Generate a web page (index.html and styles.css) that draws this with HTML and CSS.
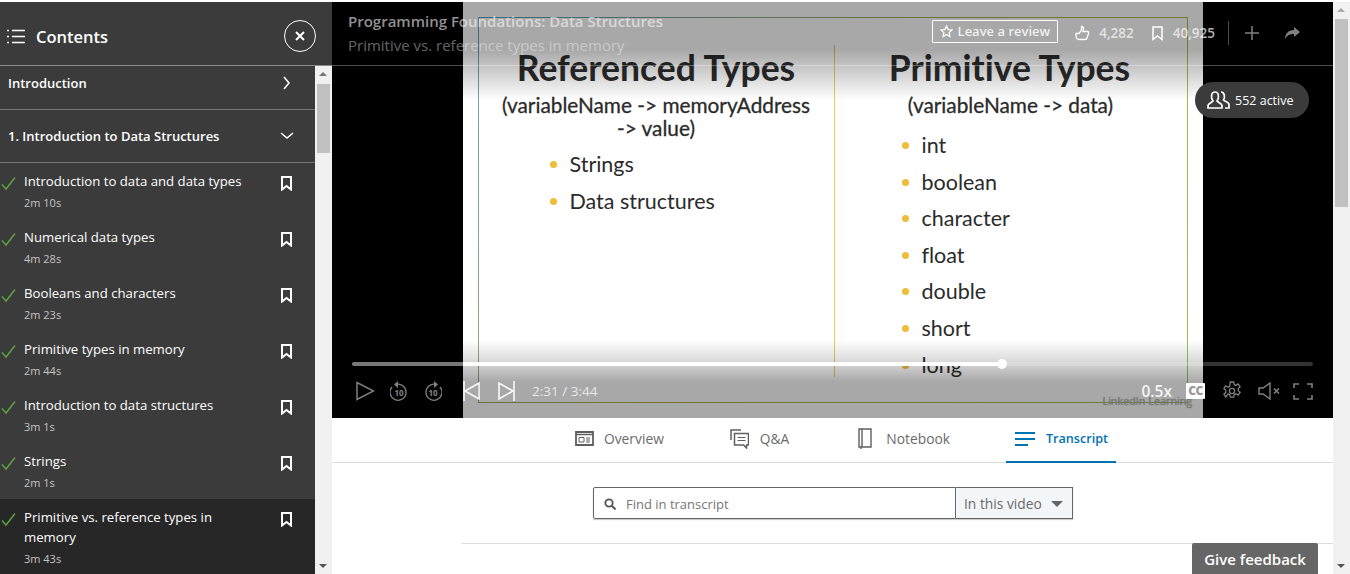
FILE: index.html
```html
<!DOCTYPE html>
<html lang="en">
<head>
    <meta charset="UTF-8">
    <meta name="viewport" content="width=device-width, initial-scale=1.0">
    <title>Primitive vs. reference types in memory</title>
    <link rel="stylesheet" href="styles.css">
</head>
<body>
    <svg class="defs" width="0" height="0">
        <symbol id="check" viewBox="0 0 15 15"><path d="M1 8.500 5 13 14 1.500" fill="none" stroke="#5f9e3e" stroke-width="1.500"/></symbol>
        <symbol id="mark" viewBox="0 0 11 15"><path d="M1 1h9v12.500L5.500 10 1 13.500z" fill="none" stroke="#fff" stroke-width="2"/></symbol>
    </svg>

    <div class="page">
        <aside class="sidebar">
            <header class="side-head">
                <svg class="list-icon" width="18" height="15" viewBox="0 0 18 15">
                    <path d="M0 1.500h2M0 7.500h2M0 13.500h2M5 1.500h13M5 7.500h13M5 13.500h13" stroke="#fff" stroke-width="1.600"/>
                </svg>
                <h2>Contents</h2>
                <button class="close-btn">
                    <svg width="10" height="10" viewBox="0 0 10 10"><path d="M1 1l8 8M9 1l-8 8" stroke="#fff" stroke-width="2"/></svg>
                </button>
            </header>
            <div class="side-body">
                <div class="toc">
                    <div class="chapter chapter-intro">
                        <span>Introduction</span>
                        <svg width="7" height="14" viewBox="0 0 7 14"><path d="M1 1l5 6-5 6" fill="none" stroke="#fff" stroke-width="1.600"/></svg>
                    </div>
                    <div class="chapter chapter-open">
                        <span>1. Introduction to Data Structures</span>
                        <svg width="14" height="8" viewBox="0 0 14 8"><path d="M1 1l6 5 6-5" fill="none" stroke="#fff" stroke-width="1.600"/></svg>
                    </div>
                    <div class="lesson">
                        <svg class="check"><use href="#check"/></svg>
                        <div class="lesson-text"><p>Introduction to data and data types</p><small>2m 10s</small></div>
                        <svg class="mark"><use href="#mark"/></svg>
                    </div>
                    <div class="lesson">
                        <svg class="check"><use href="#check"/></svg>
                        <div class="lesson-text"><p>Numerical data types</p><small>4m 28s</small></div>
                        <svg class="mark"><use href="#mark"/></svg>
                    </div>
                    <div class="lesson">
                        <svg class="check"><use href="#check"/></svg>
                        <div class="lesson-text"><p>Booleans and characters</p><small>2m 23s</small></div>
                        <svg class="mark"><use href="#mark"/></svg>
                    </div>
                    <div class="lesson">
                        <svg class="check"><use href="#check"/></svg>
                        <div class="lesson-text"><p>Primitive types in memory</p><small>2m 44s</small></div>
                        <svg class="mark"><use href="#mark"/></svg>
                    </div>
                    <div class="lesson">
                        <svg class="check"><use href="#check"/></svg>
                        <div class="lesson-text"><p>Introduction to data structures</p><small>3m 1s</small></div>
                        <svg class="mark"><use href="#mark"/></svg>
                    </div>
                    <div class="lesson">
                        <svg class="check"><use href="#check"/></svg>
                        <div class="lesson-text"><p>Strings</p><small>2m 1s</small></div>
                        <svg class="mark"><use href="#mark"/></svg>
                    </div>
                    <div class="lesson lesson-active">
                        <svg class="check"><use href="#check"/></svg>
                        <div class="lesson-text"><p>Primitive vs. reference types in memory</p><small>3m 43s</small></div>
                        <svg class="mark"><use href="#mark"/></svg>
                    </div>
                </div>
                <div class="scrollbar scrollbar-side">
                    <i class="arrow-up"></i>
                    <i class="thumb"></i>
                    <i class="arrow-down"></i>
                </div>
            </div>
        </aside>

        <main class="main">
            <section class="video">
                <div class="slide">
                    <div class="frame">
                        <div class="slide-col">
                            <h3>Referenced Types</h3>
                            <h4>(variableName -&gt; memoryAddress<br>-&gt; value)</h4>
                            <ul class="list-left">
                                <li>Strings</li>
                                <li>Data structures</li>
                            </ul>
                        </div>
                        <div class="slide-col slide-col-right">
                            <h3>Primitive Types</h3>
                            <h4>(variableName -&gt; data)</h4>
                            <ul class="list-right">
                                <li>int</li>
                                <li>boolean</li>
                                <li>character</li>
                                <li>float</li>
                                <li>double</li>
                                <li>short</li>
                                <li>long</li>
                            </ul>
                        </div>
                    </div>
                    <span class="watermark">LinkedIn Learning</span>
                </div>

                <div class="shade"></div>

                <div class="video-top">
                    <div class="titles">
                        <div class="course">Programming Foundations: Data Structures</div>
                        <div class="lesson-name">Primitive vs. reference types in memory</div>
                    </div>
                    <div class="top-actions">
                        <button class="review">
                            <svg width="13" height="13" viewBox="0 0 13 13"><path d="M6.500 1l1.600 3.600 3.900.4-2.900 2.600.8 3.900-3.400-2-3.400 2 .8-3.900L1 5l3.900-.4z" fill="none" stroke="#fff" stroke-width="1.200"/></svg>
                            Leave a review
                        </button>
                        <span class="stat stat-likes">
                            <svg width="15" height="16" viewBox="0 0 15 16"><path d="M1 8.500h3l2.500-3.500V1.500c1.500 0 2 1 2 2.500l-.5 2.500h4.500c1 0 1.500 1 1 2l-1.500 4.500c-.3 1-1 1.500-2 1.500H5c-2.500 0-4-1.500-4-3.500z" fill="none" stroke="#fff" stroke-width="1.300"/></svg>
                            4,282
                        </span>
                        <span class="stat stat-saves">
                            <svg width="11" height="15" viewBox="0 0 11 15"><path d="M1 1h9v12.500L5.500 10 1 13.500z" fill="none" stroke="#fff" stroke-width="1.500"/></svg>
                            40,925
                        </span>
                        <i class="top-sep"></i>
                        <svg class="dim" width="14" height="14" viewBox="0 0 14 14"><path d="M7 0v14M0 7h14" stroke="#fff" stroke-width="1.500"/></svg>
                        <svg class="dim share" width="17" height="14" viewBox="0 0 17 14"><path d="M10 1l6 5-6 5V8C6 8 3 9 1 13c0-5 3-9 9-9z" fill="#fff"/></svg>
                    </div>
                </div>
                <div class="top-line"></div>

                <div class="active-pill">
                    <svg width="23" height="18" viewBox="0 0 23 18"><path d="M1 17v-2.500c0-2 4-3 5-4.500-2-2-2.500-9 2-9s4 7 2 9c1 1.500 5 2.500 5 4.500V17zM14 1c4 0 4 6 2.500 8 1 1.200 5.500 2 5.500 4.500V17h-4" fill="none" stroke="#fff" stroke-width="1.700"/></svg>
                    552 active
                </div>

                <div class="controls">
                    <div class="progress"><i class="progress-fill"></i><i class="progress-knob"></i></div>
                    <div class="control-row">
                        <svg class="dim" width="19" height="20" viewBox="0 0 19 20"><path d="M1 1.500v17L17.500 10z" fill="none" stroke="#fff" stroke-width="1.500"/></svg>
                        <svg class="dim skip-back" width="18" height="20" viewBox="0 0 18 20"><path d="M6 3.500a8 8 0 1 1-4 2.500" fill="none" stroke="#fff" stroke-width="1.300"/><path d="M8 0v7L4 3.500z" fill="#fff"/><text x="9" y="15" class="ten">10</text></svg>
                        <svg class="dim skip-fwd" width="18" height="20" viewBox="0 0 18 20"><path d="M12 3.500a8 8 0 1 0 4 2.500" fill="none" stroke="#fff" stroke-width="1.300"/><path d="M10 0v7l4-3.500z" fill="#fff"/><text x="9" y="15" class="ten">10</text></svg>
                        <svg class="bright prev" width="17" height="20" viewBox="0 0 17 20"><path d="M1 0v20" stroke="#fff" stroke-width="1.500"/><path d="M16 2v16L2 10z" fill="none" stroke="#fff" stroke-width="1.500"/></svg>
                        <svg class="bright next" width="17" height="20" viewBox="0 0 17 20"><path d="M16 0v20" stroke="#fff" stroke-width="1.500"/><path d="M1 2v16l14-8z" fill="none" stroke="#fff" stroke-width="1.500"/></svg>
                        <span class="time">2:31 / 3:44</span>
                        <span class="speed">0.5x</span>
                        <span class="cc">CC</span>
                        <svg class="dim gear" width="20" height="20" viewBox="0 0 20 20"><path d="M8.300 1h3.400l.5 2.600 1.700.8 2.300-1.400 1.900 2.800-1.900 1.800v2l1.900 1.800-1.900 2.800-2.300-1.400-1.700.8-.5 2.600H8.300l-.5-2.600-1.700-.8L3.800 16l-1.900-2.800L3.800 11.400v-2L1.900 7.600 3.800 4.800l2.300 1.400 1.700-.8z" fill="none" stroke="#fff" stroke-width="1.300"/><circle cx="10" cy="10" r="2.600" fill="none" stroke="#fff" stroke-width="1.300"/></svg>
                        <svg class="dim mute" width="23" height="18" viewBox="0 0 23 18"><path d="M1 6v6h4l7 5V1L5 6z" fill="none" stroke="#fff" stroke-width="1.400"/><path d="M16 6.500l5 5M21 6.500l-5 5" stroke="#fff" stroke-width="1.600"/></svg>
                        <svg class="dim full" width="20" height="17" viewBox="0 0 20 17"><path d="M1 5V1h5M14 1h5v4M19 12v4h-5M6 16H1v-4" fill="none" stroke="#fff" stroke-width="1.600"/></svg>
                    </div>
                </div>
            </section>

            <nav class="tabs">
                <a class="tab tab-overview">
                    <svg width="19" height="15" viewBox="0 0 19 15"><path d="M1 1h17v13H1z" fill="none" stroke="#5f5f5f" stroke-width="1.800"/><path d="M1 3.500h17" stroke="#5f5f5f" stroke-width="1.500"/><path d="M4 6.500h5v4.500H4z" fill="none" stroke="#5f5f5f"/><path d="M11 7h4M11 9h4M11 11h4" stroke="#5f5f5f"/></svg>
                    Overview
                </a>
                <a class="tab tab-qa">
                    <svg width="19" height="20" viewBox="0 0 19 20"><path d="M11 1H1v10" fill="none" stroke="#5f5f5f" stroke-width="1.500"/><path d="M4.500 4.500h14v11.500h-2V19l-3-3h-9z" fill="none" stroke="#5f5f5f" stroke-width="1.500"/><path d="M7.500 8.500h8M7.500 11.500h8" stroke="#5f5f5f" stroke-width="1.200"/></svg>
                    Q&amp;A
                </a>
                <a class="tab tab-note">
                    <svg width="14" height="22" viewBox="0 0 14 22"><path d="M1 1h12v18H1zM4 1v18M3 19v2" fill="none" stroke="#5f5f5f" stroke-width="1.400"/></svg>
                    Notebook
                </a>
                <a class="tab tab-active">
                    <svg width="20" height="14" viewBox="0 0 20 14"><path d="M0 1h20M0 7h20M0 13h13" stroke="#0073b1" stroke-width="2"/></svg>
                    Transcript
                </a>
            </nav>

            <section class="transcript">
                <div class="search">
                    <div class="search-box">
                        <svg width="12" height="12" viewBox="0 0 12 12"><circle cx="5" cy="5" r="3.700" fill="none" stroke="#555" stroke-width="1.800"/><path d="M7.500 7.500l4 4" stroke="#555" stroke-width="2"/></svg>
                        <span>Find in transcript</span>
                    </div>
                    <div class="search-scope">In this video<i class="caret"></i></div>
                </div>
                <hr class="rule">
            </section>

            <button class="feedback">Give feedback</button>
        </main>

        <div class="scrollbar scrollbar-page">
            <i class="arrow-up"></i>
            <i class="thumb"></i>
            <i class="arrow-down"></i>
        </div>
    </div>
</body>
</html>
```

FILE: styles.css
```css
* {
    box-sizing: border-box;
}

body {
    margin: 0;
    background-color: #fff;
    font-family: 'Open Sans', 'Noto Sans', sans-serif;
    color: #333;
    overflow: hidden;
}

.defs {
    position: absolute;
}

.page {
    display: flex;
    height: 574px;
    padding-top: 2px;
}

/* sidebar */
.sidebar {
    width: 332px;
    flex: none;
    display: flex;
    flex-direction: column;
    background-color: #3b3b3b;
    color: #fff;
}

.side-head {
    height: 64px;
    flex: none;
    display: flex;
    align-items: center;
    padding: 5px 16px 0 7px;
    border-bottom: 1px solid #8a8a8a;
}

.side-head h2 {
    margin: 0 0 0 11px;
    font-size: 16.500px;
    font-weight: 600;
    flex: 1;
}

.close-btn {
    width: 32px;
    height: 32px;
    display: flex;
    align-items: center;
    justify-content: center;
    background: none;
    border: 1px solid #fff;
    border-radius: 50%;
    padding: 0;
}

.side-body {
    flex: 1;
    display: flex;
    min-height: 0;
}

.toc {
    width: 315px;
    overflow: hidden;
}

.chapter {
    display: flex;
    align-items: center;
    justify-content: space-between;
    padding: 0 24px 0 8px;
    font-size: 13px;
    font-weight: 600;
    border-bottom: 1px solid #777;
}

.chapter-intro {
    height: 44px;
    padding-right: 25px;
    padding-bottom: 10px;
}

.chapter-open {
    height: 53px;
    padding-right: 21px;
}

.lesson {
    display: flex;
    height: 56px;
    padding: 8px 0 0 1px;
    font-size: 13.200px;
}

.lesson-active {
    height: 78px;
    background-color: #272727;
}

.check {
    width: 15px;
    height: 15px;
    flex: none;
    margin-top: 5px;
}

.lesson-text {
    width: 225px;
    margin-left: 8px;
}

.lesson-text p {
    margin: 0;
    line-height: 20px;
}

.lesson-text small {
    display: block;
    margin-top: 4px;
    font-size: 11px;
    line-height: 16px;
    color: #c4c4c4;
}

.mark {
    width: 11px;
    height: 15px;
    flex: none;
    margin: 5px 0 0 32px;
}

/* scrollbars */
.scrollbar {
    width: 17px;
    flex: none;
    position: relative;
    background-color: #f1f1f1;
}

.scrollbar .thumb {
    display: block;
    position: absolute;
    left: 2px;
    width: 13px;
    background-color: #c1c1c1;
}

.scrollbar-side .thumb {
    top: 18px;
    height: 69px;
}

.scrollbar-page .thumb {
    top: 17px;
    height: 188px;
}

.arrow-up,
.arrow-down {
    position: absolute;
    left: 4px;
    width: 0;
    height: 0;
    border-left: 4px solid transparent;
    border-right: 4px solid transparent;
}

.arrow-up {
    top: 6px;
    border-bottom: 4px solid #777;
}

.arrow-down {
    bottom: 6px;
    border-top: 4px solid #555;
}

.scrollbar-page .arrow-up {
    border-bottom-color: #aaa;
}

/* video */
.main {
    width: 1001px;
    flex: none;
    position: relative;
}

.video {
    height: 416px;
    position: relative;
    display: flex;
    justify-content: center;
    background-color: #000;
    overflow: hidden;
}

.slide {
    width: 740px;
    height: 416px;
    padding: 15px;
    position: relative;
    background-color: #fff;
    font-family: 'Lato', 'Open Sans', sans-serif;
    font-variant-ligatures: none;
    color: #2b2b2b;
}

.frame {
    height: 386px;
    display: grid;
    grid-template-columns: 355px 1fr;
    grid-template-rows: 332px;
    padding: 27px 0 25px;
    border: 1px solid;
    border-image: linear-gradient(135deg, #5f9fc4, #b3b04a 50%, #9cc060) 1;
}

.slide-col {
    text-align: center;
}

.slide-col-right {
    border-left: 1px solid #edc65a;
}

.slide h3 {
    margin: -1px 0 0;
    font-size: 35.500px;
    line-height: 48px;
    font-weight: 700;
}

.slide-col-right h3 {
    padding-right: 2px;
}

.slide h4 {
    margin: 1px 0 0;
    font-size: 20.800px;
    line-height: 23px;
    font-weight: 400;
    -webkit-text-stroke: 0.3px #2b2b2b;
}

.slide ul {
    list-style: none;
    margin: 0;
    padding: 0;
    text-align: left;
    font-size: 21.500px;
    font-weight: 400;
}

.slide li {
    position: relative;
    height: 36.600px;
    line-height: 36.600px;
}

.slide li::before {
    content: "";
    position: absolute;
    left: -20px;
    top: 15px;
    width: 7px;
    height: 7px;
    border-radius: 50%;
    background-color: #efbd3a;
}

.slide .list-left {
    margin-top: 7px;
    padding-left: 91px;
}

.slide .list-right {
    margin-top: 11px;
    padding-left: 87px;
}

.watermark {
    position: absolute;
    left: 640px;
    top: 392px;
    font-family: 'Open Sans', sans-serif;
    font-size: 10.800px;
    line-height: 14px;
    color: #c0c0c0;
    text-shadow: 0 0 1px #888;
}

.shade {
    position: absolute;
    inset: 0;
    background: linear-gradient(to bottom,
        rgba(0, 0, 0, 0.34) 0,
        rgba(0, 0, 0, 0.34) 48px,
        rgba(0, 0, 0, 0) 98px,
        rgba(0, 0, 0, 0) 338px,
        rgba(0, 0, 0, 0.12) 356px,
        rgba(0, 0, 0, 0.34) 380px,
        rgba(0, 0, 0, 0.34) 416px);
}

.video-top {
    position: absolute;
    left: 16px;
    right: 32px;
    top: 8px;
    display: flex;
    justify-content: space-between;
}

.course {
    font-size: 15px;
    line-height: 22px;
    font-weight: 600;
    color: rgba(255, 255, 255, 0.58);
}

.lesson-name {
    font-size: 15px;
    line-height: 22px;
    margin-top: 2px;
    color: rgba(255, 255, 255, 0.4);
}

.top-actions {
    display: flex;
    align-items: center;
    height: 46px;
    color: rgba(255, 255, 255, 0.7);
    font-size: 13.500px;
    font-weight: 600;
}

.review {
    display: flex;
    align-items: center;
    gap: 5px;
    height: 23px;
    margin-top: -4px;
    padding: 0 7px;
    background: none;
    border: 1px solid #fff;
    border-radius: 1px;
    color: rgba(255, 255, 255, 0.85);
    font: 600 13px 'Open Sans', sans-serif;
}

.stat {
    display: flex;
    align-items: center;
    gap: 9px;
    margin-left: 17px;
}

.stat-saves {
    margin-left: 18px;
    gap: 10px;
}

.top-sep {
    width: 1px;
    height: 24px;
    margin: 0 16px 0 13px;
    background-color: rgba(255, 255, 255, 0.3);
}

.top-actions .dim {
    opacity: 0.5;
}

.share {
    margin-left: 25px;
}

.top-line {
    position: absolute;
    left: 0;
    right: 0;
    top: 63px;
    height: 1px;
    background-color: rgba(255, 255, 255, 0.3);
}

.active-pill {
    position: absolute;
    left: 863px;
    top: 80px;
    width: 114px;
    height: 36px;
    display: flex;
    align-items: center;
    gap: 5px;
    padding-left: 12px;
    border-radius: 18px;
    background-color: #3b3b3b;
    color: #fff;
    font-size: 12.500px;
}

.controls {
    position: absolute;
    left: 20px;
    right: 20px;
    top: 360px;
}

.progress {
    height: 4px;
    position: relative;
    border-radius: 2px;
    background-color: rgba(255, 255, 255, 0.2);
}

.progress-fill {
    position: absolute;
    left: 0;
    top: 0;
    bottom: 0;
    width: 650px;
    border-radius: 2px;
    background: linear-gradient(to right, #777 111px, #fff 111px);
}

.progress-knob {
    position: absolute;
    left: 645px;
    top: -3px;
    width: 10px;
    height: 10px;
    border-radius: 50%;
    background-color: #fff;
}

.control-row {
    display: flex;
    align-items: center;
    height: 20px;
    margin-top: 15px;
    padding-left: 4px;
    color: #fff;
}

.control-row .dim {
    opacity: 0.5;
}

.control-row .ten {
    font: 700 8px 'Open Sans', sans-serif;
    fill: #fff;
    text-anchor: middle;
}

.skip-back {
    margin-left: 15px;
}

.skip-fwd {
    margin-left: 16px;
}

.prev {
    margin-left: 21px;
}

.next {
    margin-left: 18px;
}

.time {
    flex: none;
    margin-left: 17px;
    font-size: 13.500px;
    color: rgba(255, 255, 255, 0.75);
}

.speed {
    margin-left: auto;
    font-size: 15.500px;
    font-weight: 600;
    color: rgba(255, 255, 255, 0.9);
}

.cc {
    margin-left: 14px;
    width: 19px;
    height: 16px;
    border-radius: 1px;
    background-color: #fff;
    color: #999;
    font-size: 12px;
    font-weight: 800;
    line-height: 16px;
    text-align: center;
    letter-spacing: -0.5px;
}

.gear {
    margin-left: 17px;
}

.mute {
    margin-left: 16px;
}

.full {
    margin-left: 12px;
}

/* tabs */
.tabs {
    height: 45px;
    display: flex;
    gap: 48px;
    padding-left: 234px;
    border-bottom: 1px solid #ddd;
}

.tab {
    height: 45px;
    display: flex;
    align-items: center;
    gap: 10px;
    padding: 0 9px 4px;
    font-size: 13.800px;
    color: #6b6b6b;
}

.tab-qa {
    gap: 11px;
}

.tab-note {
    gap: 14px;
    margin-left: 3px;
}

.tab-active {
    color: #0073b1;
    font-size: 12.600px;
    font-weight: 600;
    border-bottom: 2px solid #0073b1;
    gap: 11px;
    margin-left: -1px;
    padding: 0 8px 2px 9px;
}

.transcript {
    padding-top: 24px;
}

.search {
    display: flex;
    width: 480px;
    height: 32px;
    margin-left: 261px;
    box-shadow: 0 1px 1px #ccc;
}

.search-box {
    width: 363px;
    display: flex;
    align-items: center;
    gap: 10px;
    padding: 1px 0 0 10px;
    border: 1px solid #666;
    border-radius: 2px 0 0 2px;
    font-size: 13px;
    color: #777;
}

.search-scope {
    width: 117px;
    display: flex;
    align-items: center;
    justify-content: space-between;
    padding: 0 9px 0 8px;
    background-color: #f3f6f8;
    border: 1px solid #666;
    border-left: none;
    font-size: 13.800px;
    color: #6b6b6b;
}

.caret {
    width: 0;
    height: 0;
    border-left: 6px solid transparent;
    border-right: 6px solid transparent;
    border-top: 6px solid #666;
    margin-top: 2px;
}

.rule {
    margin: 24px 0 0 129px;
    border: none;
    border-top: 1px solid #ddd;
}

.feedback {
    position: absolute;
    left: 860px;
    top: 541px;
    width: 126px;
    height: 31px;
    border: none;
    border-radius: 2px 2px 0 0;
    background-color: #666;
    color: #fff;
    font: 600 15px 'Open Sans', sans-serif;
}
```
